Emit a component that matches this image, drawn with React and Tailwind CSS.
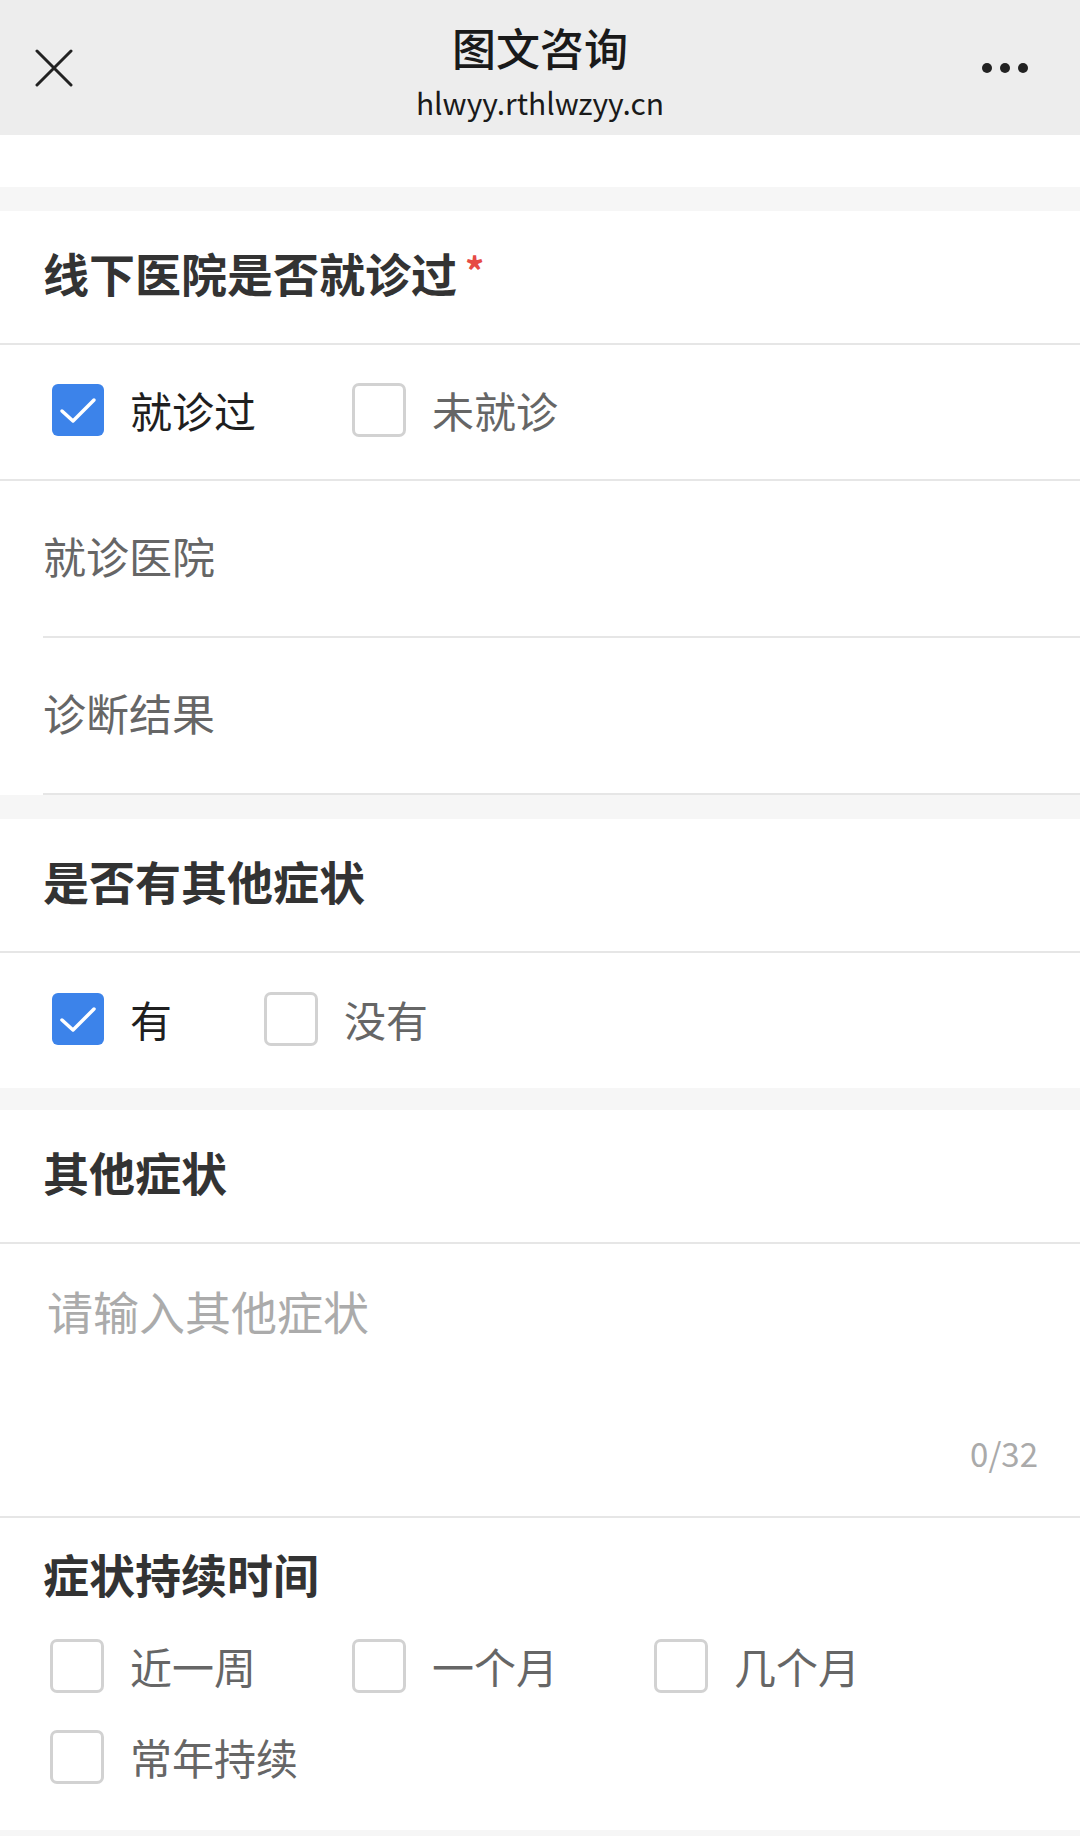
import React from 'react';

const font = "font-['Noto_Sans_CJK_SC','Noto_Sans',sans-serif]";

function Box({ checked }) {
  if (checked) {
    return (
      <span className="flex h-[52px] w-[52px] shrink-0 items-center justify-center rounded-[6px] bg-[#3c83ea]">
        <svg width="52" height="52" viewBox="0 0 52 52" fill="none">
          <path d="M10 27 L21 37 L42 16" stroke="#fff" strokeWidth="3.5" strokeLinecap="round" strokeLinejoin="round" />
        </svg>
      </span>
    );
  }
  return <span className="h-[54px] w-[54px] shrink-0 rounded-[7px] border-[3px] border-[#d2d2d2] bg-white" />;
}

function Option({ label, checked }) {
  return (
    <div className="flex items-center gap-[26px]">
      <Box checked={checked} />
      <span className={`text-[42px] leading-[52px] ${checked ? 'text-[#1f1f1f]' : 'text-[#666]'}`}>{label}</span>
    </div>
  );
}

function SectionTitle({ children, required }) {
  return (
    <div className="flex h-[134px] items-center border-b-2 border-[#e6e6e6] px-[43px] pb-[10px]">
      <span className="text-[46px] font-bold leading-[56px] text-[#333]">
        {children}
        {required && <span className="ml-[8px] align-[6px] text-[38px] leading-none text-[#e64a45]">*</span>}
      </span>
    </div>
  );
}

export default function App() {
  return (
    <div className={`${font} min-h-screen w-[1080px] bg-[#f6f6f6]`}>
      {/* top bar */}
      <div className="grid h-[135px] grid-cols-[1fr_auto_1fr] bg-[#ededed]">
        <div className="flex items-center pl-[35px]">
          <svg width="38" height="38" viewBox="0 0 38 38" fill="none">
            <path d="M2 2 L36 36 M36 2 L2 36" stroke="#222" strokeWidth="3" strokeLinecap="round" />
          </svg>
        </div>
        <div className="flex flex-col items-center pt-[21px]">
          <div className="text-[44px] font-medium leading-[52px] text-[#1a1a1a]">图文咨询</div>
          <div className="mt-[11px] text-[30px] leading-[36px] text-[#1a1a1a]">hlwyy.rthlwzyy.cn</div>
        </div>
        <div className="flex items-center justify-end gap-[8px] pr-[52px]">
          <span className="h-[10px] w-[10px] rounded-full bg-[#222]" />
          <span className="h-[10px] w-[10px] rounded-full bg-[#222]" />
          <span className="h-[10px] w-[10px] rounded-full bg-[#222]" />
        </div>
      </div>
      <div className="h-[52px] bg-white" />
      <div className="h-[24px]" />

      {/* visited hospital */}
      <div className="bg-white">
        <SectionTitle required>线下医院是否就诊过</SectionTitle>
        <div className="flex h-[136px] items-center gap-[96px] border-b-2 border-[#e6e6e6] pb-[4px] pl-[52px]">
          <Option label="就诊过" checked />
          <Option label="未就诊" />
        </div>
        <div className="ml-[43px] flex h-[157px] items-center border-b-2 border-[#e6e6e6] pb-[8px]">
          <span className="text-[43px] leading-[52px] text-[#666]">就诊医院</span>
        </div>
        <div className="ml-[43px] flex h-[157px] items-center border-b-2 border-[#e6e6e6] pb-[8px]">
          <span className="text-[43px] leading-[52px] text-[#666]">诊断结果</span>
        </div>
      </div>
      <div className="h-[24px]" />

      {/* other symptoms */}
      <div className="bg-white">
        <SectionTitle>是否有其他症状</SectionTitle>
        <div className="flex h-[135px] items-center gap-[92px] pb-[4px] pl-[52px]">
          <Option label="有" checked />
          <Option label="没有" />
        </div>
      </div>
      <div className="h-[22px]" />

      <div className="bg-white">
        <SectionTitle>其他症状</SectionTitle>
        <div className="flex h-[274px] flex-col justify-between border-b-2 border-[#e6e6e6] pb-[43px] pl-[47px] pr-[42px] pt-[38px]">
          <span className="text-[46px] leading-[56px] text-[#ababab]">请输入其他症状</span>
          <span className="self-end text-[33px] leading-[40px] text-[#aaa]">0/32</span>
        </div>

        <div className="pb-[46px] pt-[27px]">
          <div className="px-[43px] text-[46px] font-bold leading-[56px] text-[#333]">症状持续时间</div>
          <div className="mt-[38px] flex flex-wrap gap-x-[96px] gap-y-[37px] pl-[50px]">
            <Option label="近一周" />
            <Option label="一个月" />
            <Option label="几个月" />
            <Option label="常年持续" />
          </div>
        </div>
      </div>
    </div>
  );
}
